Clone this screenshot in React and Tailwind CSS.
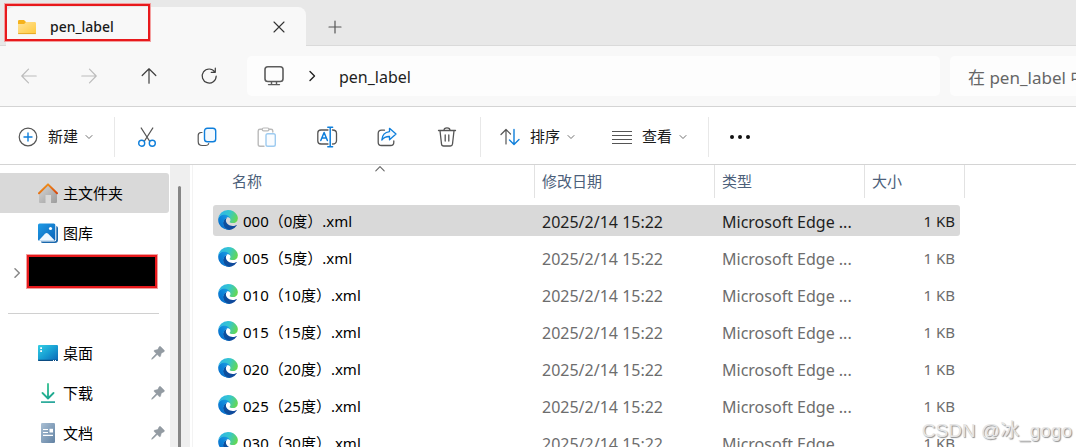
import React from "react";

const files = [
  { name: "000（0度）.xml", selected: true },
  { name: "005（5度）.xml" },
  { name: "010（10度）.xml" },
  { name: "015（15度）.xml" },
  { name: "020（20度）.xml" },
  { name: "025（25度）.xml" },
  { name: "030（30度）.xml" },
];

function Svg({ size = 20, className = "", children }) {
  return (
    <svg
      width={size}
      height={size}
      viewBox={`0 0 ${size} ${size}`}
      fill="none"
      stroke="currentColor"
      strokeWidth="1.2"
      strokeLinecap="round"
      strokeLinejoin="round"
      className={`shrink-0 ${className}`}
      aria-hidden="true"
    >
      {children}
    </svg>
  );
}

function ChevronDown() {
  return (
    <Svg size={8} className="text-[#707070]">
      <path d="M1 2.5 4 5.5 7 2.5" strokeWidth="1" />
    </Svg>
  );
}

function FolderIcon() {
  return (
    <Svg size={20}>
      <defs>
        <linearGradient id="folder" x1="0" y1="0" x2="1" y2="1">
          <stop offset="0" stopColor="#ffe39a" />
          <stop offset="1" stopColor="#ffc93c" />
        </linearGradient>
      </defs>
      <path d="M1 4.2Q1 3 2.2 3H7L9 5v4H1Z" fill="#f5b21c" stroke="none" />
      <path d="M1 7h6.2L9 5h8.800Q19 5 19 6.200V15.800Q19 17 17.800 17H2.200Q1 17 1 15.800Z" fill="url(#folder)" stroke="none" />
      <path d="M1.500 16.600h17" stroke="#e2a323" strokeWidth="0.900" />
    </Svg>
  );
}

function EdgeIcon({ id }) {
  return (
    <svg width="20" height="20" viewBox="0 0 256 260" className="mb-[3px] shrink-0" aria-hidden="true">
      <defs>
        <linearGradient id={`${id}a`} x1="0.1" y1="0.5" x2="0.95" y2="0.6">
          <stop offset="0" stopColor="#0c4f9e" />
          <stop offset="1" stopColor="#10489b" />
        </linearGradient>
        <linearGradient id={`${id}b`} x1="0.8" y1="0.1" x2="0.2" y2="0.9">
          <stop offset="0" stopColor="#1b9de2" />
          <stop offset="0.5" stopColor="#0c82d8" />
          <stop offset="1" stopColor="#0a6fca" />
        </linearGradient>
        <linearGradient id={`${id}c`} x1="0" y1="0.3" x2="1" y2="0.6">
          <stop offset="0" stopColor="#2fb4e8" />
          <stop offset="0.5" stopColor="#35c6cf" />
          <stop offset="1" stopColor="#66d850" />
        </linearGradient>
      </defs>
      <path
        fill={`url(#${id}a)`}
        d="M235.680 195.460a93.730 93.730 0 0 1-10.540 4.710 101.870 101.870 0 0 1-35.900 6.460c-47.320 0-88.540-32.550-88.540-74.320A31.480 31.480 0 0 1 117.130 105c-42.800 1.800-53.800 46.400-53.800 72.530 0 73.880 68.090 81.370 82.760 81.370 7.910 0 19.840-2.300 27-4.560l1.310-.44a128.340 128.340 0 0 0 66.600-52.800 4 4 0 0 0-5.320-5.640z"
      />
      <path
        fill={`url(#${id}b)`}
        d="M105.730 241.420A79.200 79.200 0 0 1 83 220.100a80.720 80.720 0 0 1 29.500-120.790c3.120-1.470 8.450-4.130 15.540-4a32.350 32.350 0 0 1 25.690 13 31.880 31.880 0 0 1 6.360 18.660c0-.21 24.460-79.600-80-79.600-43.900 0-80 41.660-80 78.210a130.150 130.150 0 0 0 12.110 56 128 128 0 0 0 156.380 67.110 75.550 75.550 0 0 1-62.780-8z"
      />
      <path
        fill={`url(#${id}c)`}
        d="M152.330 148.860c-.81 1.050-3.300 2.500-3.300 5.660 0 2.610 1.700 5.120 4.720 7.230 14.380 10 41.490 8.680 41.560 8.680a59.560 59.560 0 0 0 30.270-8.350A61.380 61.380 0 0 0 256 109.190c.26-22.410-8-37.310-11.340-43.910C223.460 23.840 177.720 0 128 0A128 128 0 0 0 0 126.200c.48-36.540 36.800-66.050 80-66.050 3.500 0 23.460.34 42 10.070 16.340 8.580 24.900 18.940 30.850 29.210 6.180 10.670 7.280 24.150 7.280 29.520s-2.740 13.330-7.800 19.910z"
      />
    </svg>
  );
}

function HomeIcon() {
  return (
    <Svg>
      <defs>
        <linearGradient id="wall" x1="0" y1="0" x2="1" y2="1">
          <stop offset="0" stopColor="#d6d6d6" />
          <stop offset="1" stopColor="#9c9c9c" />
        </linearGradient>
        <linearGradient id="roof" x1="0" y1="0" x2="1" y2="1">
          <stop offset="0" stopColor="#f5a01c" />
          <stop offset="1" stopColor="#d8480f" />
        </linearGradient>
      </defs>
      <path d="M10 2 19 10.500V18.500Q19 20 18 20H13V12H7.500V20H2Q1 20 1 19V10.500Z" fill="url(#wall)" stroke="none" />
      <path d="M1 10.200 10 1.400l9 8.800" stroke="url(#roof)" strokeWidth="2" />
    </Svg>
  );
}

function GalleryIcon() {
  return (
    <Svg>
      <defs>
        <linearGradient id="sky" x1="0" y1="0" x2="1" y2="1">
          <stop offset="0" stopColor="#1f9be6" />
          <stop offset="1" stopColor="#0a62b8" />
        </linearGradient>
      </defs>
      <path d="M18.300 3Q20 3.500 20 5V17Q20 20 17 20H5Q3.200 20 2.800 18.500H16.500Q18.300 18.500 18.300 16.500Z" fill="#1a68ad" stroke="none" />
      <rect x="0" y="0.500" width="17.300" height="17.300" rx="1.500" fill="url(#sky)" stroke="none" />
      <path d="M1 17.200 7 10.800Q8.600 9.200 10.200 10.800L16.500 17.200Q15.800 17.800 15.500 17.800H2Q1.400 17.800 1 17.200Z" fill="#eef7ff" stroke="none" />
      <circle cx="12.500" cy="5.500" r="1.600" fill="#fff" stroke="none" />
    </Svg>
  );
}

function DesktopIcon() {
  return (
    <Svg>
      <defs>
        <linearGradient id="desk" x1="0" y1="0" x2="1" y2="1">
          <stop offset="0" stopColor="#35cfe4" />
          <stop offset="0.500" stopColor="#189fd3" />
          <stop offset="1" stopColor="#0c65b5" />
        </linearGradient>
      </defs>
      <rect x="0" y="2" width="20" height="16" rx="1" fill="url(#desk)" stroke="none" />
      <path d="M0 16.800h20V17q0 1-1 1H1q-1 0-1-1Z" fill="#0b4c82" stroke="none" />
      <path d="M2.200 4.200h1.800V6H2.200ZM2.200 7.200h1.800V9H2.200ZM15 17h1v1h-1ZM17 17h1v1h-1Z" fill="#fff" stroke="none" />
    </Svg>
  );
}

function DownloadIcon() {
  return (
    <Svg>
      <defs>
        <linearGradient id="down" gradientUnits="userSpaceOnUse" x1="4" y1="0" x2="14" y2="20">
          <stop offset="0" stopColor="#36c58d" />
          <stop offset="1" stopColor="#139c92" />
        </linearGradient>
      </defs>
      <path d="M10 .9 10.010 15M4.500 10 10 15.500l5.500-5.500" stroke="url(#down)" strokeWidth="1.800" />
      <path d="M3 18.300h14v1.600H3Z" fill="url(#down)" stroke="none" />
    </Svg>
  );
}

function DocumentIcon() {
  return (
    <Svg>
      <defs>
        <linearGradient id="doc" x1="0" y1="0" x2="1" y2="1">
          <stop offset="0" stopColor="#a9bfd4" />
          <stop offset="1" stopColor="#6282a3" />
        </linearGradient>
      </defs>
      <rect x="3" y="0" width="14" height="20" rx="1.300" fill="url(#doc)" stroke="none" />
      <path d="M5 6.500h5M5 9.500h5M5 12.300h10" stroke="#fff" strokeWidth="1.200" strokeLinecap="butt" />
      <path d="M11.500 5.800H15V9.500H11.500Z" fill="#fff" stroke="none" />
    </Svg>
  );
}

function PinIcon() {
  return (
    <Svg size={14}>
      <path
        d="M8.200.8Q8.900 0 9.700.7L13.200 4.300Q13.900 5.100 13 5.700L10.300 7.200 9.500 10.200Q9.100 11.200 8.300 10.500L6.200 8.500 2 12.700.6 13.300 1.200 11.800 5.300 7.600 3.200 5.500Q2.600 4.700 3.500 4.300L6.700 3.500Z"
        fill="#939ba2"
        stroke="#939ba2"
        strokeWidth="0.5"
      />
    </Svg>
  );
}

function NavButton({ label, disabled, children }) {
  return (
    <button
      type="button"
      aria-label={label}
      disabled={disabled}
      className="flex h-10 w-10 items-center justify-center text-[#3f3f3f] disabled:text-[#bcbcbc]"
    >
      {children}
    </button>
  );
}

function ToolButton({ label, disabled, children }) {
  return (
    <button
      type="button"
      aria-label={label}
      disabled={disabled}
      className="flex h-10 w-10 items-center justify-center text-[#555] disabled:opacity-40"
    >
      {children}
    </button>
  );
}

function MenuButton({ label, children }) {
  return (
    <button type="button" className="flex h-10 items-center text-[15px] text-[#1a1a1a]">
      <span className="mr-2.5 text-[#555]">{children}</span>
      <span className="mr-[7px]">{label}</span>
      <ChevronDown />
    </button>
  );
}

function SideItem({ label, icon, selected, pinned }) {
  return (
    <li>
      <a
        href="#"
        className={`flex h-10 items-center rounded-r-[3px] pr-1 pl-[38px] text-[15px] text-black ${selected ? "bg-[#d9d9d9]" : ""}`}
      >
        {icon}
        <span className="ml-[5px] flex-1">{label}</span>
        {pinned && <PinIcon />}
      </a>
    </li>
  );
}

function TabStrip() {
  return (
    <header className="flex h-[46px] items-end bg-[#e8e8e8]">
      <div className="w-[6px] self-stretch border-b border-[#dadada]" />
      <div className="relative flex h-[39px] w-[300px] items-center rounded-t-lg bg-[#f8f8f8] pr-[17px] pl-[11px]">
        <FolderIcon />
        <span className="ml-[13px] flex-1 text-[14px] font-medium text-[#1a1a1a]">pen_label</span>
        <button type="button" aria-label="关闭标签页" className="flex h-5 w-5 items-center justify-center text-[#333]">
          <Svg size={12}>
            <path d="M1 1 11 11M11 1 1 11" strokeWidth="1.100" />
          </Svg>
        </button>
        <div className="absolute -top-[3px] left-[-1px] h-[37px] w-[145px] border-[2px] border-[#e8191c] shadow-[0_0_0_1px_#f3a0a0]" />
      </div>
      <div className="flex flex-1 items-center self-stretch border-b border-[#dadada] pt-2 pl-[19px]">
        <button type="button" aria-label="新建标签页" className="flex h-5 w-5 items-center justify-center text-[#555]">
          <Svg size={14}>
            <path d="M7 1V13M1 7H13" />
          </Svg>
        </button>
      </div>
    </header>
  );
}

function AddressRow() {
  return (
    <nav className="flex h-[61px] items-center border-b border-[#d4d4d4] bg-[#f8f8f8] pl-[9px]">
      <div className="flex gap-5 pr-[18px]">
        <NavButton label="后退" disabled>
          <Svg size={16}>
            <path d="M15.200 8H1M7.500 1.200 .8 8l6.700 6.800" />
          </Svg>
        </NavButton>
        <NavButton label="前进" disabled>
          <Svg size={16}>
            <path d="M.8 8H15M8.500 1.200 15.200 8 8.500 14.800" />
          </Svg>
        </NavButton>
        <NavButton label="向上">
          <Svg size={16}>
            <path d="M8 15.200V1M1.200 7.500 8 .8l6.800 6.700" />
          </Svg>
        </NavButton>
        <NavButton label="刷新">
          <Svg size={18}>
            <path d="M14.800 4.800A7 7 0 1 0 16.200 9M15.300 1.200V5.300H11.200" />
          </Svg>
        </NavButton>
      </div>
      <div className="flex h-10 flex-1 items-center rounded-[5px] bg-[#fdfdfd] pl-[17px]">
        <Svg className="text-[#5c5c5c]">
          <rect x="1" y="0.800" width="18" height="14.700" rx="2.800" strokeWidth="1.600" />
          <path d="M7.500 16V18M12.500 16V18M4.500 18.600H15.500" strokeWidth="1.400" />
        </Svg>
        <Svg size={12} className="ml-[22px] text-[#222]">
          <path d="M4 1.500 8.500 6 4 10.500" strokeWidth="1.400" />
        </Svg>
        <a href="#" className="ml-[21px] pt-0.5 text-[16px] text-[#1f1f1f]">
          pen_label
        </a>
      </div>
      <input
        type="text"
        aria-label="搜索"
        placeholder="在 pen_label 中搜索"
        className="ml-[10px] h-10 w-[126px] rounded-l-[5px] bg-[#fdfdfd] pt-0.5 pl-[18px] text-[17px] outline-none placeholder:text-[#666]"
      />
    </nav>
  );
}

function Divider({ className = "" }) {
  return <div className={`h-10 w-px bg-[#e8e8e8] ${className}`} />;
}

function Toolbar() {
  return (
    <div role="toolbar" className="flex h-[58px] items-center border-b border-[#d4d4d4] bg-white pt-0.5 pl-[18px]">
      <MenuButton label="新建">
        <Svg>
          <circle cx="10" cy="10" r="8.800" />
          <path d="M10 6v8M6 10h8" stroke="#0f7fdb" strokeWidth="1.400" />
        </Svg>
      </MenuButton>
      <Divider className="mr-3 ml-[21px]" />
      <div className="flex gap-5">
        <ToolButton label="剪切">
          <Svg>
            <path d="M4.200 1 12.500 14M15.800 1 7.500 14" strokeWidth="1.300" />
            <circle cx="4.700" cy="16.200" r="3" stroke="#0f7fdb" strokeWidth="1.400" />
            <circle cx="15.300" cy="16.200" r="3" stroke="#0f7fdb" strokeWidth="1.400" />
          </Svg>
        </ToolButton>
        <ToolButton label="复制">
          <Svg>
            <path d="M5 5.500H4Q1.200 5.700 1.200 8.500V14.500Q1.200 18.500 5.200 18.500H8.500Q11.300 18.500 11.700 16.500" />
            <rect x="7.500" y="1.200" width="11.200" height="13.500" rx="2.800" stroke="#0f7fdb" strokeWidth="1.400" fill="#f2f9ff" />
          </Svg>
        </ToolButton>
        <ToolButton label="粘贴" disabled>
          <Svg>
            <path d="M7 19.200H3Q1.200 19.200 1.200 17.400V4Q1.200 2.300 3 2.300H5M12 2.300H14Q15.800 2.300 15.800 4V5" strokeWidth="1.400" />
            <rect x="5.200" y="1" width="6.800" height="2.800" rx="1.400" />
            <rect x="9" y="6.800" width="9.300" height="12.500" rx="1.800" stroke="#0f7fdb" strokeWidth="1.400" fill="#f2f9ff" />
          </Svg>
        </ToolButton>
        <ToolButton label="重命名">
          <Svg size={22}>
            <path d="M12 4H5Q1.800 4 1.800 7V15Q1.800 18 5 18H12M16.500 4Q20.500 4 20.500 7.500V14.500Q20.500 18 16.500 18" strokeWidth="1.300" />
            <path d="M14.200 1.200V20.800M11.800 1.200H16.600M11.800 20.800H16.600M4.800 14.500 8.100 6.500 11.400 14.500M5.900 12H10.300" stroke="#0f7fdb" strokeWidth="1.500" />
          </Svg>
        </ToolButton>
        <ToolButton label="共享">
          <Svg>
            <path d="M7.500 3.200H4.500Q1.200 3.200 1.200 6.500V15.200Q1.200 18.500 4.500 18.500H13.500Q16.800 18.500 16.800 15.200V14" strokeWidth="1.300" />
            <path d="M12.500 1.300 19 7 12.500 12.700V9.500Q7.800 9.300 4.800 13Q5.300 5.500 12.500 4.600Z" stroke="#0f7fdb" strokeWidth="1.300" fill="#f2f9ff" />
          </Svg>
        </ToolButton>
        <ToolButton label="删除">
          <Svg>
            <path d="M1.500 3.500H18.500M7 3.300Q7 .9 10 .9T13 3.300M3 3.800 4.500 17Q4.700 19 6.700 19H13.300Q15.300 19 15.500 17L17 3.800M8.200 8V14M11.800 8V14" strokeWidth="1.300" />
          </Svg>
        </ToolButton>
      </div>
      <Divider className="mr-[19px] ml-[13px]" />
      <MenuButton label="排序">
        <Svg>
          <path d="M6 17V2.500M1 7.500 6 2.500l4.500 4.500" />
          <path d="M14 2.500V17.300M9.500 13 14 17.500l5-5" stroke="#0f7fdb" strokeWidth="1.400" />
        </Svg>
      </MenuButton>
      <div className="w-[37px]" />
      <MenuButton label="查看">
        <Svg>
          <path d="M0 4.500H20M0 8.500H20M0 12.500H20M0 16.500H20" strokeLinecap="butt" />
        </Svg>
      </MenuButton>
      <Divider className="mr-[11px] ml-[21px]" />
      <ToolButton label="查看更多">
        <Svg size={22}>
          <path d="M3 11h.01M11 11h.01M19 11h.01" stroke="#111" strokeWidth="4" />
        </Svg>
      </ToolButton>
    </div>
  );
}

function Sidebar() {
  return (
    <aside className="flex shrink-0">
      <div className="w-[170px] pt-2 pr-px">
        <ul>
          <SideItem label="主文件夹" icon={<HomeIcon />} selected />
          <SideItem label="图库" icon={<GalleryIcon />} />
          <li className="flex h-10 items-center pl-3">
            <button type="button" aria-label="展开" className="text-[#888]">
              <Svg size={10}>
                <path d="M3 .8 7.300 5 3 9.200" strokeWidth="1.500" />
              </Svg>
            </button>
            <div className="mt-0.5 mr-3 ml-[5px] h-[33px] flex-1 self-start border-2 border-[#e8191c] bg-black shadow-[0_0_0_1px_#f3a0a0]" />
          </li>
        </ul>
        <hr className="mt-5 mr-[10px] mb-[19px] ml-2 border-[#d0d0d0]" />
        <ul>
          <SideItem label="桌面" icon={<DesktopIcon />} pinned />
          <SideItem label="下载" icon={<DownloadIcon />} pinned />
          <SideItem label="文档" icon={<DocumentIcon />} pinned />
        </ul>
      </div>
      <div className="w-5 bg-[#efefef] pt-[21px] pl-2">
        <div className="h-full w-[3px] rounded-t-full bg-[#868686]" />
      </div>
      <div className="ml-0.5 w-px bg-[#f3f3f3]" />
    </aside>
  );
}

function HeadCell({ label, first, sorted }) {
  return (
    <th scope="col" className="h-[37px] p-0 align-top font-normal">
      <div className={`relative flex h-[33px] items-center border-r border-[#e2e2e2] text-[#4c607a] ${first ? "pl-[19px]" : "pl-[7px]"}`}>
        {label}
        {sorted && (
          <div className="absolute inset-x-0 top-0 flex justify-center pl-3">
            <Svg size={10} className="text-[#666]">
              <path d="M.8 5.800 5 1.600 9.200 5.800" strokeWidth="1.100" />
            </Svg>
          </div>
        )}
      </div>
    </th>
  );
}

function FileRow({ file, index }) {
  const bg = file.selected ? "bg-[#d9d9d9]" : "";
  const tone = file.selected ? "text-[#1f1f1f]" : "text-[#6d6d6d]";
  return (
    <tr aria-selected={Boolean(file.selected)}>
      <td className="h-[37px] p-0">
        <div className={`flex h-[31px] items-center rounded-l-[3px] pt-0.5 pl-[5px] text-black ${bg}`}>
          <EdgeIcon id={`edge${index}`} />
          <span className="ml-[5px]">{file.name}</span>
        </div>
      </td>
      <td className="p-0">
        <div className={`flex h-[31px] items-center pt-0.5 pl-[7px] text-[16px] ${bg} ${tone}`}>2025/2/14 15:22</div>
      </td>
      <td className="p-0">
        <div className={`flex h-[31px] items-center pt-0.5 pl-[7px] text-[16px] ${bg} ${tone}`}>Microsoft Edge ...</div>
      </td>
      <td className="p-0">
        <div className={`mr-[5px] flex h-[31px] items-center justify-end rounded-r-[3px] pt-0.5 pr-[5px] ${bg} ${tone}`}>1 KB</div>
      </td>
    </tr>
  );
}

function FileList() {
  return (
    <main className="flex-1 pl-5">
      <table className="w-[752px] table-fixed border-collapse text-left text-[15px] whitespace-nowrap">
        <colgroup>
          <col />
          <col className="w-[180px]" />
          <col className="w-[150px]" />
          <col className="w-[100px]" />
        </colgroup>
        <thead>
          <tr>
            <HeadCell label="名称" first sorted />
            <HeadCell label="修改日期" />
            <HeadCell label="类型" />
            <HeadCell label="大小" />
          </tr>
        </thead>
        <tbody>
          {files.map((file, index) => (
            <FileRow key={file.name} file={file} index={index} />
          ))}
        </tbody>
      </table>
    </main>
  );
}

export default function App() {
  return (
    <div className="relative flex h-screen flex-col overflow-hidden bg-white font-['Noto_Sans','Noto_Sans_CJK_SC',sans-serif]">
      <div className="shrink-0">
        <TabStrip />
        <AddressRow />
        <Toolbar />
      </div>
      <div className="flex min-h-0 flex-1 overflow-hidden">
        <Sidebar />
        <FileList />
      </div>
      <div className="absolute right-1 bottom-0.5 font-['Liberation_Sans','Noto_Sans_CJK_SC',sans-serif] text-[19px] text-[#e6e6e6] [text-shadow:1px_1px_1px_#8f8f8f]">
        CSDN @冰_gogo
      </div>
    </div>
  );
}
